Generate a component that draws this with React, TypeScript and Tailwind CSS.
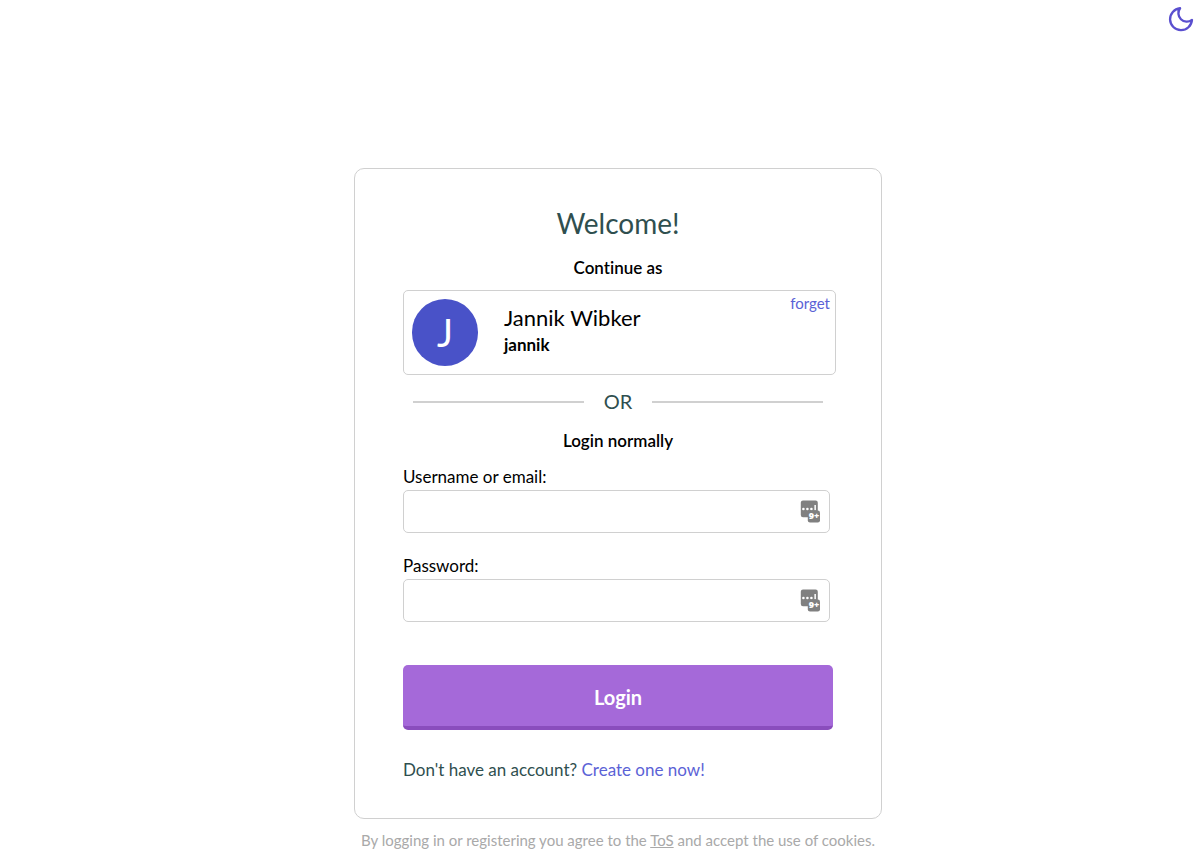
import React from 'react';

function MoonIcon() {
  return (
    <svg className="size-7" viewBox="0 0 24 24" fill="none" stroke="#5a4fcf" strokeWidth="2" strokeLinecap="round" strokeLinejoin="round" aria-hidden="true">
      <path d="M21.4 12.79A9.4 9.4 0 1 1 11.21 2.8 7.2 7.2 0 0 0 21.4 12.79z" />
    </svg>
  );
}

function PasswordManagerIcon() {
  return (
    <svg className="h-6 w-5" viewBox="0 0 20 24" aria-hidden="true">
      <rect x="0.8" y="0.6" width="17" height="16.6" rx="2.2" fill="#808080" />
      <circle cx="3.4" cy="9" r="1.3" fill="#fff" />
      <circle cx="7.4" cy="9" r="1.3" fill="#fff" />
      <circle cx="11.4" cy="9" r="1.3" fill="#fff" />
      <rect x="14.4" y="5" width="1.5" height="5.2" fill="#fff" />
      <rect x="7.8" y="10.6" width="12.2" height="11.8" rx="2.2" fill="#808080" />
      <text x="13.9" y="19" textAnchor="middle" fontSize="9" fontWeight="900" fill="#fff" fontFamily="Open Sans, sans-serif">9+</text>
    </svg>
  );
}

type FieldProps = { id: string; label: string; type: string; className: string };

function Field({ id, label, type, className }: FieldProps) {
  return (
    <div className={`mr-[3px] ${className}`}>
      <label htmlFor={id} className="block text-[17px] leading-6 text-black">{label}</label>
      <div className="mt-px flex h-[43px] items-center rounded-[5px] border border-[#d0d0d0] bg-white pr-[9px]">
        <input id={id} type={type} className="h-full min-w-0 flex-1 bg-transparent px-3 text-[17px] outline-none" />
        <PasswordManagerIcon />
      </div>
    </div>
  );
}

export default function App() {
  return (
    <div className="min-h-screen bg-white font-['Lato',sans-serif] text-[#2f4f4f] [font-variant-ligatures:none]">
      <header className="flex justify-end pt-[5px] pr-[5px]">
        <button type="button" aria-label="Toggle dark mode">
          <MoonIcon />
        </button>
      </header>
      <div className="pt-[135px] pl-9">
        <main className="mx-auto w-full max-w-[528px] rounded-[10px] border border-[#d0d0d0] px-12 pt-[34px] pb-9">
          <h1 className="text-center text-[28px] leading-10">Welcome!</h1>
          <h2 className="mt-[13px] text-center text-[17px] leading-6 font-semibold text-black">Continue as</h2>
          <div className="mt-[10px] -mr-[3px] flex items-start rounded-[5px] border border-[#d0d0d0] p-2 text-black">
            <div className="flex h-[67px] w-[66px] shrink-0 items-center justify-center rounded-full bg-[#4952c8] text-[38px] text-white">J</div>
            <div className="ml-[26px] flex-1 pt-1">
              <div className="text-[22px] leading-[30px]">Jannik Wibker</div>
              <div className="text-[17px] leading-6 font-bold">jannik</div>
            </div>
            <button type="button" className="-mt-2 -mr-[3px] text-[15px] leading-6 text-[#5b62d6]">forget</button>
          </div>
          <div className="mx-[10px] mt-3 flex items-center gap-5">
            <div className="mt-0.5 h-0.5 flex-1 bg-[#d0d0d0]" />
            <span className="text-[20px] leading-7">OR</span>
            <div className="mt-0.5 h-0.5 flex-1 bg-[#d0d0d0]" />
          </div>
          <form onSubmit={(event) => event.preventDefault()}>
            <h2 className="mt-[14px] text-center text-[17px] leading-6 font-semibold text-black">Login normally</h2>
            <Field id="username" label="Username or email:" type="text" className="mt-3" />
            <Field id="password" label="Password:" type="password" className="mt-[21px]" />
            <button type="submit" className="mt-[43px] h-[65px] w-full rounded-[5px] border-b-4 border-[#8a4dbd] bg-[#a569d9] pt-[3px] text-[20px] font-bold text-white">
              Login
            </button>
          </form>
          <p className="mt-7 text-[17px] leading-6">
            Don't have an account? <a href="#register" className="text-[#5b62d6]">Create one now!</a>
          </p>
        </main>
        <footer className="mt-3 text-center text-[15px] leading-[18px] text-[#a9a9a9]">
          By logging in or registering you agree to the <a href="#tos" className="underline">ToS</a> and accept the use of cookies.
        </footer>
      </div>
    </div>
  );
}
